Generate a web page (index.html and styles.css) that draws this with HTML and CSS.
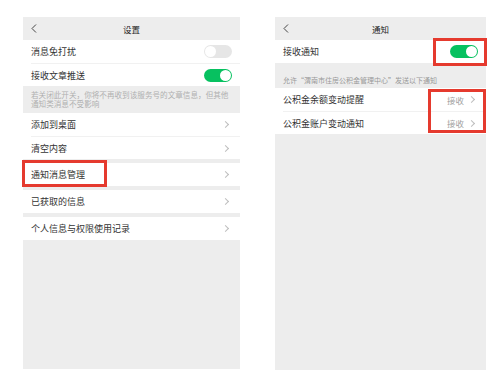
FILE: index.html
```html
<!DOCTYPE html>
<html lang="zh">
<head>
  <meta charset="UTF-8">
  <title>设置 / 通知</title>
  <link rel="stylesheet" href="styles.css">
</head>
<body>

  <div class="screens">

    <div class="phone phone-left">
      <div class="nav">
        <svg class="back" width="6" height="9" viewBox="0 0 6 9"><polyline points="5,0.5 1,4.5 5,8.5" fill="none" stroke="#444" stroke-width="1"/></svg>
        <span class="nav-title">设置</span>
      </div>

      <div class="group">
        <div class="row"><span>消息免打扰</span><span class="switch"></span></div>
        <div class="row"><span>接收文章推送</span><span class="switch on"></span></div>
      </div>
      <div class="note">若关闭此开关，你将不再收到该服务号的文章信息，但其他通知类消息不受影响</div>

      <div class="group">
        <div class="row"><span>添加到桌面</span><i class="chev"></i></div>
        <div class="row"><span>清空内容</span><i class="chev"></i></div>
      </div>
      <div class="group">
        <div class="row"><span>通知消息管理</span><i class="chev"></i></div>
      </div>
      <div class="group">
        <div class="row"><span>已获取的信息</span><i class="chev"></i></div>
      </div>
      <div class="group">
        <div class="row"><span>个人信息与权限使用记录</span><i class="chev"></i></div>
      </div>

      <div class="mark mark-manage"></div>
    </div>

    <div class="phone phone-right">
      <div class="nav">
        <svg class="back" width="6" height="9" viewBox="0 0 6 9"><polyline points="5,0.5 1,4.5 5,8.5" fill="none" stroke="#444" stroke-width="1"/></svg>
        <span class="nav-title">通知</span>
      </div>

      <div class="group">
        <div class="row"><span>接收通知</span><span class="switch on"></span></div>
      </div>
      <div class="caption">允许“渭南市住房公积金管理中心”发送以下通知</div>

      <div class="group">
        <div class="row"><span>公积金余额变动提醒</span><span class="value">接收<i class="chev"></i></span></div>
        <div class="row"><span>公积金账户变动通知</span><span class="value">接收<i class="chev"></i></span></div>
      </div>

      <div class="mark mark-switch"></div>
      <div class="mark mark-values"></div>
    </div>

  </div>

</body>
</html>
```

FILE: styles.css
```css
body {
  margin: 0;
  background-color: #fff;
  font-family: "Noto Sans CJK SC", "Noto Sans", sans-serif;
  color: #333;
}

.screens {
  display: flex;
  padding-top: 17px;
}

.phone {
  position: relative;
  background-color: #ededed;
}

.phone-left {
  margin-left: 23px;
  width: 217px;
  height: 352px;
}

.phone-right {
  margin-left: 35px;
  width: 211px;
  height: 353px;
}

.nav {
  height: 23px;
  display: flex;
  align-items: center;
  justify-content: center;
  position: relative;
}

.back {
  position: absolute;
  left: 8px;
  top: 7px;
}

.nav-title {
  font-size: 8.5px;
  color: #222;
}

.group {
  background-color: #fff;
  margin-bottom: 4px;
}

.row {
  height: 23px;
  box-sizing: border-box;
  margin-left: 8px;
  padding-right: 10px;
  display: flex;
  align-items: center;
  justify-content: space-between;
  font-size: 9px;
  border-top: 1px solid #f1f1f1;
}

.row:first-child {
  border-top: none;
}

.note {
  margin-top: -4px;
  padding: 4px 8px 5px;
  font-size: 7.6px;
  line-height: 9px;
  color: #b0b0b0;
}

.caption {
  margin-top: -4px;
  height: 25px;
  padding-left: 8px;
  font-size: 7px;
  line-height: 8px;
  color: #999;
  display: flex;
  align-items: flex-end;
  box-sizing: border-box;
  padding-bottom: 4px;
}

.switch {
  width: 28px;
  height: 13px;
  border-radius: 7px;
  background-color: #e6e6e6;
  position: relative;
  margin-right: -2px;
}

.switch::after {
  content: "";
  position: absolute;
  left: 1px;
  top: 1px;
  width: 11px;
  height: 11px;
  border-radius: 50%;
  background-color: #fff;
}

.switch.on {
  background-color: #07c160;
}

.switch.on::after {
  left: 16px;
}

.chev {
  width: 4px;
  height: 4px;
  border-top: 1px solid #bdbdbd;
  border-right: 1px solid #bdbdbd;
  transform: rotate(45deg);
  margin-right: 2px;
}

.value {
  display: flex;
  align-items: center;
  gap: 5px;
  color: #a0a0a0;
  font-size: 8.5px;
}

.mark {
  position: absolute;
  border: 3px solid #e53a2e;
  box-sizing: border-box;
}

.mark-manage {
  left: -1px;
  top: 143px;
  width: 85px;
  height: 27px;
}

.mark-switch {
  left: 158px;
  top: 21px;
  width: 54px;
  height: 28px;
}

.mark-values {
  left: 153px;
  top: 72px;
  width: 58px;
  height: 44px;
}
```
